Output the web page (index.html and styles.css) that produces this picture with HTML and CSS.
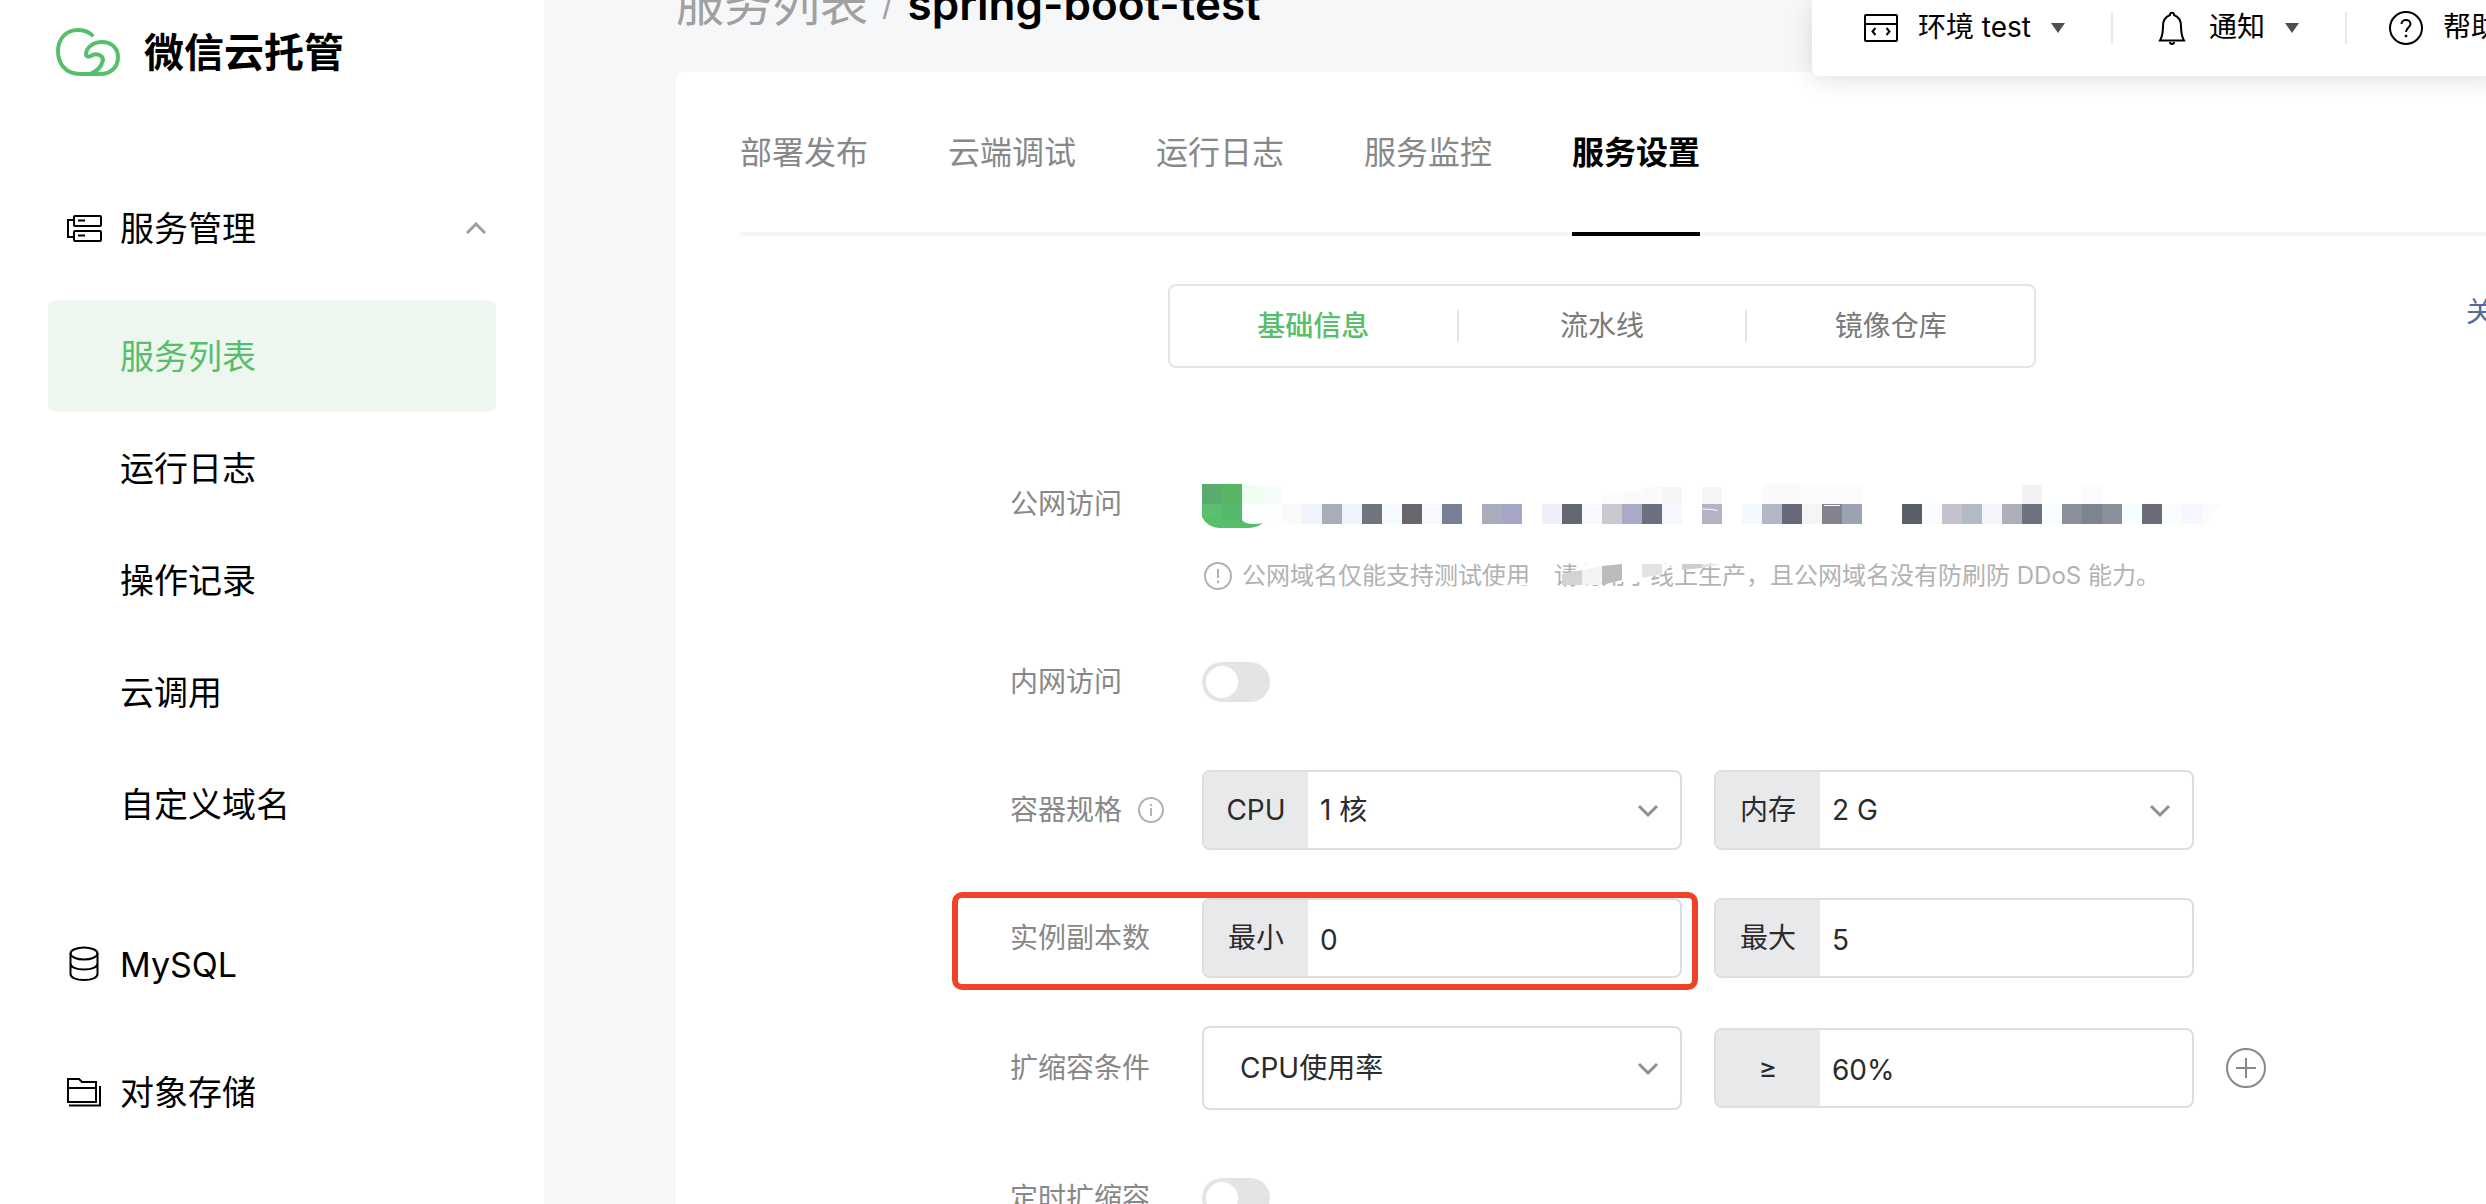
FILE: index.html
```html
<!DOCTYPE html>
<html lang="zh-CN">
<head>
<meta charset="utf-8">
<title>微信云托管</title>
<link rel="stylesheet" href="styles.css">
</head>
<body>
<div class="app">
  <aside class="sidebar">
    <a class="brand" href="#">
      <svg class="brand-logo" width="64" height="48" viewBox="0 0 64 48" fill="none" stroke="currentColor" stroke-width="4" stroke-linecap="round" stroke-linejoin="round">
        <path d="M36 7C32 3.500 27 2 22 2C10 2 2 11 2 23C2 36 10 46 24 46H44C55 46 62 39 62 29C62 19 54 14 46 14C37 14 30 20 30 26C30 29 33 29 36 27.500C40 25 47 27 47 32C46 37 42 43 34 46"/>
      </svg>
      <span>微信云托管</span>
    </a>
    <nav class="menu">
      <button class="menu-item" type="button" aria-expanded="true">
        <svg width="36" height="28" viewBox="0 0 36 28" fill="none" stroke="currentColor" stroke-width="2">
          <rect x="8" y="2" width="27" height="10" rx="1"/><rect x="8" y="17" width="27" height="10" rx="1"/><path d="M8 6H2V23H8M12 6.500H19M12 21.500H19"/>
        </svg>
        <span class="menu-label">服务管理</span>
        <svg width="20" height="12" viewBox="0 0 20 12" fill="none" stroke="#9e9fa1" stroke-width="3"><path d="M1 11L10 2L19 11"/></svg>
      </button>
      <ul class="submenu">
        <li><a class="sub-item active" href="#">服务列表</a></li>
        <li><a class="sub-item" href="#">运行日志</a></li>
        <li><a class="sub-item" href="#">操作记录</a></li>
        <li><a class="sub-item" href="#">云调用</a></li>
        <li><a class="sub-item" href="#">自定义域名</a></li>
      </ul>
      <a class="menu-item" href="#">
        <svg width="36" height="36" viewBox="0 0 36 36" fill="none" stroke="currentColor" stroke-width="2">
          <ellipse cx="18" cy="7.500" rx="13.500" ry="6"/><path d="M4.500 7.500V28C4.500 31.500 10 34 18 34S31.500 31.500 31.500 28V7.500M4.500 17.500C4.500 21 10 23.500 18 23.500S31.500 21 31.500 17.500"/>
        </svg>
        <span class="menu-label">MySQL</span>
      </a>
      <a class="menu-item" href="#">
        <svg width="36" height="30" viewBox="0 0 36 30" fill="none" stroke="currentColor" stroke-width="2">
          <path d="M2 2H13L16 5H30V25H2ZM2 11H30M3 28.500H34V9"/>
        </svg>
        <span class="menu-label">对象存储</span>
      </a>
    </nav>
  </aside>

  <main class="main">
    <div class="crumbs"><a href="#">服务列表</a><span class="slash">/</span><strong>spring-boot-test</strong></div>

    <div class="topbar">
      <button class="top-item" type="button">
        <svg width="34" height="28" viewBox="0 0 34 28" fill="none" stroke="currentColor" stroke-width="2"><rect x="1" y="1" width="32" height="26" rx="1"/><path d="M1 10H33M11.500 14L8.500 17.500L11.500 21M22.500 14L25.500 17.500L22.500 21"/></svg>
        <span>环境 test</span><i class="caret"></i>
      </button>
      <button class="top-item" type="button">
        <svg width="34" height="34" viewBox="0 0 34 34" fill="none" stroke="currentColor" stroke-width="2"><path d="M15 4C15 1 19 1 19 4C24 6 26 9 26 15C26 23 27 26 29 29.500H5C7 26 8 23 8 15C8 9 10 6 15 4ZM15 31C15 33.500 19 33.500 19 31"/></svg>
        <span>通知</span><i class="caret"></i>
      </button>
      <button class="top-item" type="button">
        <svg width="34" height="34" viewBox="0 0 34 34" fill="none" stroke="currentColor" stroke-width="2"><circle cx="17" cy="17" r="16"/><path d="M12.500 13C12.500 7.500 21.500 7.500 21.500 13C21.500 16.500 17 16.500 17 21"/><circle cx="17" cy="25" r="1" fill="currentColor" stroke-width="1"/></svg>
        <span>帮助</span>
      </button>
    </div>

    <section class="card">
      <nav class="tabs">
        <a href="#">部署发布</a><a href="#">云端调试</a><a href="#">运行日志</a><a href="#">服务监控</a><a class="active" href="#">服务设置</a>
      </nav>

      <div class="toolbar">
        <div class="segment">
          <button class="active" type="button">基础信息</button>
          <button type="button">流水线</button>
          <button type="button">镜像仓库</button>
        </div>
        <a class="side-link" href="#">关</a>
      </div>

      <form class="form">
        <div class="row row-top">
          <span class="label">公网访问</span>
          <div class="public">
            <svg class="mosaic" width="1024" height="44" viewBox="0 0 1024 44" shape-rendering="crispEdges">
              <path shape-rendering="auto" fill="#57be6a" d="M0 20V33C4 40 10 44 18 44H44C52 44 57 42 61 39C52 41 43 40 40 36V20Z"/>
              <g>
                <path fill="#59ab70" d="M0 0h20v20H0z"/><path fill="#57b564" d="M20 0h20v20H20z"/><path fill="#edffee" d="M40 0l20 2v18H40z"/><path fill="#f5fcfa" d="M60 3h20v17H60z"/>
                <path fill="#fcfcfc" d="M400 10h20v10h-20z"/><path fill="#fafafa" d="M420 8h20v12h-20zM440 3h20v17h-20z"/><path fill="#f6f6f6" d="M460 3h20v17h-20zM500 3h20v17h-20z"/>
                <path fill="#fafafa" d="M560 0h40v20h-40z"/><path fill="#fcfcff" d="M600 0h60v20h-60z"/><path fill="#f2f2f2" d="M820 1h20v19h-20z"/><path fill="#fcfcfc" d="M880 1h20v19h-20z"/>
              </g>
              <g>
                <path fill="#5bc06e" d="M0 20h20v13H0z"/><path fill="#57b86b" d="M20 20h20v16H20z"/><path fill="#fbfefd" d="M60 20h20v18H60z"/>
                <path fill="#fbfafa" d="M80 20h20v20H80z"/><path fill="#eff3fc" d="M100 20h20v20h-20zM140 20h20v20h-20z"/><path fill="#a9adba" d="M120 20h20v20h-20zM280 20h20v20h-20z"/>
                <path fill="#70757f" d="M160 20h20v20h-20z"/><path fill="#f6fbff" d="M180 20h20v20h-20z"/><path fill="#69666d" d="M200 20h20v20h-20z"/><path fill="#f9f8ff" d="M220 20h20v20h-20zM380 20h20v20h-20z"/>
                <path fill="#788095" d="M240 20h20v20h-20z"/><path fill="#a6a7c6" d="M300 20h20v20h-20z"/><path fill="#efeffa" d="M340 20h20v20h-20z"/><path fill="#636871" d="M360 20h20v20h-20z"/>
                <path fill="#cac9cf" d="M400 20h20v20h-20z"/><path fill="#a9aac8" d="M420 20h20v20h-20z"/><path fill="#6b6f7e" d="M440 20h20v20h-20z"/><path fill="#f5f7ff" d="M460 20h20v20h-20z"/>
                <path fill="#b5b3c5" d="M500 20h20v20h-20z"/><path fill="#f2f8fb" d="M540 20h20v20h-20z"/><path fill="#b2b6c5" d="M560 20h20v20h-20z"/><path fill="#666978" d="M580 20h20v20h-20z"/>
                <path fill="#f5f5f6" d="M600 20h20v20h-20z"/><path fill="#82838f" d="M620 20h20v20h-20z"/><path fill="#9aa2b3" d="M640 20h20v20h-20z"/><path fill="#5b5f68" d="M700 20h20v20h-20z"/>
                <path fill="#fafdfe" d="M720 20h20v20h-20zM840 20h20v20h-20zM960 20h20v20h-20z"/><path fill="#c4c3cd" d="M740 20h20v20h-20z"/><path fill="#b2bac6" d="M760 20h20v20h-20z"/><path fill="#f5f4fa" d="M780 20h20v20h-20z"/>
                <path fill="#adafbb" d="M800 20h20v20h-20z"/><path fill="#6e727f" d="M820 20h20v20h-20z"/><path fill="#8b8e9b" d="M860 20h20v20h-20zM900 20h20v20h-20z"/><path fill="#7b848f" d="M880 20h20v20h-20z"/>
                <path fill="#f4ffff" d="M920 20h20v20h-20z"/><path fill="#6a6c79" d="M940 20h20v20h-20z"/><path fill="#f4f7ff" d="M980 20h20v20h-20z"/><path fill="#fcfcfc" d="M1000 20h20l-12 14v6h-8z"/>
              </g>
              <path shape-rendering="auto" stroke="#fff" fill="none" d="M500 25Q510 25 516 26.500M622 21.500H640" stroke-dasharray="16 3"/>
            </svg>
            <p class="hint">
              <svg width="28" height="28" viewBox="0 0 28 28" fill="none" stroke="currentColor" stroke-width="2"><circle cx="14" cy="14" r="13"/><path d="M14 7V16M14 18.500V21"/></svg>
              <span>公网域名仅能支持测试使用，请勿用于线上生产，且公网域名没有防刷防 DDoS 能力。</span>
              <svg class="smudge" width="240" height="28" viewBox="-20 0 240 28">
                <path fill="#fff" d="M-20 23Q0 21 26 19V0H52V28H26V21L-20 25ZM76 0H170L160 10L142 14L138 18H60V11L76 8Z"/>
                <path fill="#d3d3d3" d="M60 10L80 6V21H60Z"/><path fill="#f3f3f3" d="M80 6L100 2V21H80Z"/><path fill="#bbb" d="M100 2L120 0V16L100 21Z"/>
                <path fill="#e3e3e3" d="M140 0H160V10L140 14Z"/><path fill="#cecece" d="M180 0H200V4L180 6Z"/><path fill="#e3e3e3" d="M200 0H218L200 4Z"/>
              </svg>
            </p>
          </div>
        </div>

        <div class="row">
          <label class="label" for="intranet">内网访问</label>
          <input class="switch" id="intranet" type="checkbox">
        </div>

        <div class="row">
          <label class="label" for="cpu">容器规格
            <svg width="26" height="26" viewBox="0 0 26 26" fill="none" stroke="#b2b2b2" stroke-width="2"><circle cx="13" cy="13" r="12"/><path d="M13 11V19M13 7V9"/></svg>
          </label>
          <div class="field">
            <label class="prefix" for="cpu">CPU</label>
            <select id="cpu"><option>1 核</option></select>
            <svg class="arrow" width="20" height="14" viewBox="0 0 20 14"><path d="M1 2L10 11L19 2"/></svg>
          </div>
          <div class="field">
            <label class="prefix" for="mem">内存</label>
            <select id="mem"><option>2 G</option></select>
            <svg class="arrow" width="20" height="14" viewBox="0 0 20 14"><path d="M1 2L10 11L19 2"/></svg>
          </div>
        </div>

        <div class="row marked">
          <label class="label" for="min">实例副本数</label>
          <div class="field">
            <label class="prefix" for="min">最小</label>
            <input id="min" type="text" value="0">
          </div>
          <div class="field">
            <label class="prefix" for="max">最大</label>
            <input id="max" type="text" value="5">
          </div>
        </div>

        <div class="row">
          <label class="label" for="metric">扩缩容条件</label>
          <div class="field field-plain">
            <select id="metric"><option>CPU使用率</option></select>
            <svg class="arrow" width="20" height="14" viewBox="0 0 20 14"><path d="M1 2L10 11L19 2"/></svg>
          </div>
          <div class="field">
            <label class="prefix" for="limit">≥</label>
            <input id="limit" type="text" value="60%">
          </div>
          <button class="add" type="button" aria-label="添加条件">
            <svg width="40" height="40" viewBox="0 0 40 40" fill="none" stroke="#888" stroke-width="2"><circle cx="20" cy="20" r="19"/><path d="M10 20H30M20 10V30"/></svg>
          </button>
        </div>

        <div class="row">
          <label class="label" for="timer">定时扩缩容</label>
          <input class="switch" id="timer" type="checkbox">
        </div>
      </form>
    </section>
  </main>
</div>
</body>
</html>
```
FILE: styles.css
```css
*,
*::before,
*::after {
  box-sizing: border-box;
}

body {
  margin: 0;
  height: 100vh;
  overflow: hidden;
  background: #f6f7f9;
  color: #000;
  font-family: Inter, "Noto Sans CJK SC", sans-serif;
  font-size: 28px;
  line-height: 40px;
}

a {
  color: inherit;
  text-decoration: none;
}

button,
input,
select {
  margin: 0;
  padding: 0;
  border: 0;
  background: none;
  color: inherit;
  font: inherit;
}

svg {
  display: block;
  flex: none;
}

.app {
  display: flex;
  height: 100vh;
}

/* Sidebar */
.sidebar {
  flex: none;
  width: 544px;
  padding: 28px 48px 0;
  background: #fff;
}

.brand {
  display: flex;
  align-items: center;
  gap: 24px;
  height: 48px;
  padding-left: 8px;
  font-size: 40px;
  font-weight: 600;
}

.brand span {
  padding-top: 2px;
}

.brand-logo {
  color: #57be6a;
}

.menu {
  display: flex;
  flex-direction: column;
  gap: 16px;
  margin-top: 96px;
  font-size: 34px;
}

.menu-item {
  display: flex;
  align-items: center;
  gap: 18px;
  height: 112px;
  padding: 0 10px 0 18px;
  text-align: left;
}

.menu-label {
  flex: 1;
  padding-top: 2px;
}

.submenu {
  margin: 0 0 32px;
  padding: 0;
  list-style: none;
}

.sub-item {
  display: flex;
  align-items: center;
  height: 112px;
  padding: 2px 0 0 72px;
  border-radius: 8px;
}

.sub-item.active {
  background: #edf7ef;
  color: #57be6a;
}

/* Main column */
.main {
  position: relative;
  flex: 1;
  min-width: 0;
  padding-left: 132px;
  overflow: hidden;
}

.crumbs {
  display: flex;
  gap: 14px;
  margin: -20px 0 44px;
  font-size: 48px;
  line-height: 48px;
  color: #a0a0a0;
}

.crumbs .slash {
  font-size: 32px;
}

.crumbs strong {
  color: #000;
  font-size: 44px;
  font-weight: 600;
}

.topbar {
  position: absolute;
  top: 0;
  right: -13px;
  display: flex;
  height: 76px;
  padding: 12px 0 0 52px;
  border-radius: 0 0 0 8px;
  background: #fff;
  box-shadow: 0 4px 24px rgba(0, 0, 0, 0.12);
}

.top-item {
  display: flex;
  align-items: center;
  gap: 20px;
  height: 32px;
  white-space: nowrap;
}

.top-item span {
  padding-bottom: 2px;
}

.top-item + .top-item {
  margin-left: 46px;
  padding-left: 42px;
  border-left: 2px solid #e8e8e8;
}

.caret {
  border: 7px solid transparent;
  border-top: 10px solid #505050;
  border-bottom: 0;
}

.card {
  padding-left: 64px;
  border-radius: 8px 0 0 0;
  background: #fff;
}

.tabs {
  display: flex;
  gap: 80px;
  height: 164px;
  border-bottom: 4px solid #f6f6f6;
  font-size: 32px;
  color: #888;
}

.tabs a {
  height: 164px;
  padding-top: 61px;
}

.tabs .active {
  border-bottom: 4px solid #000;
  color: #000;
  font-weight: 600;
}

.toolbar {
  display: flex;
  justify-content: space-between;
  padding: 48px 0 96px 428px;
}

.segment {
  display: flex;
  width: 868px;
  height: 84px;
  padding: 24px 0;
  border: 2px solid #e5e5e5;
  border-radius: 8px;
  color: #7a7a7a;
}

.segment button {
  flex: 1;
  line-height: 32px;
}

.segment button + button {
  border-left: 2px solid #e5e5e5;
}

.segment .active {
  color: #57be6a;
  font-weight: 500;
}

.side-link {
  margin: 8px -8px 0 0;
  color: #576b95;
}

/* Settings form */
.form {
  display: flex;
  flex-direction: column;
  gap: 48px;
  padding: 0 0 48px 270px;
}

.row {
  display: flex;
  align-items: center;
  gap: 32px;
  min-height: 80px;
}

.row-top {
  align-items: flex-start;
  height: 130px;
}

.label {
  display: flex;
  flex: none;
  align-items: center;
  gap: 16px;
  width: 160px;
  color: #888;
}

.row-top .label {
  padding-top: 20px;
}

.public {
  padding-top: 20px;
}

.hint {
  position: relative;
  display: flex;
  align-items: center;
  gap: 10px;
  margin: 28px 0 0;
  padding-left: 2px;
  color: #b2b2b2;
  font-size: 24px;
}

.smudge {
  position: absolute;
  top: 8px;
  left: 280px;
}

.switch {
  display: flex;
  align-items: center;
  width: 68px;
  height: 40px;
  padding: 4px;
  border-radius: 20px;
  background: #e4e4e4;
  appearance: none;
}

.switch::before {
  width: 32px;
  height: 32px;
  border-radius: 50%;
  background: #fff;
  content: "";
}

.switch:checked {
  justify-content: flex-end;
  background: #57be6a;
}

.field {
  position: relative;
  display: flex;
  flex: none;
  width: 480px;
  height: 80px;
  border: 2px solid #dcdee0;
  border-radius: 8px;
  background: #fff;
  color: #2b2b2b;
}

.prefix {
  display: flex;
  align-items: center;
  justify-content: center;
  width: 104px;
  border-radius: 6px 0 0 6px;
  background: #e8e9eb;
}

.field input,
.field select {
  flex: 1;
  min-width: 0;
  padding: 0 12px;
  outline: 0;
  appearance: none;
}

.field input {
  padding-top: 4px;
}

.field-plain {
  height: 84px;
}

.field-plain select {
  padding-left: 36px;
}

.arrow {
  position: absolute;
  top: 50%;
  right: 22px;
  margin-top: -6px;
  fill: none;
  stroke: #8f8f8f;
  stroke-width: 3px;
  pointer-events: none;
}

.marked {
  position: relative;
}

.marked::after {
  position: absolute;
  top: -6px;
  left: -58px;
  width: 746px;
  height: 98px;
  border: 6px solid #ef4226;
  border-radius: 10px;
  content: "";
  pointer-events: none;
}
```
